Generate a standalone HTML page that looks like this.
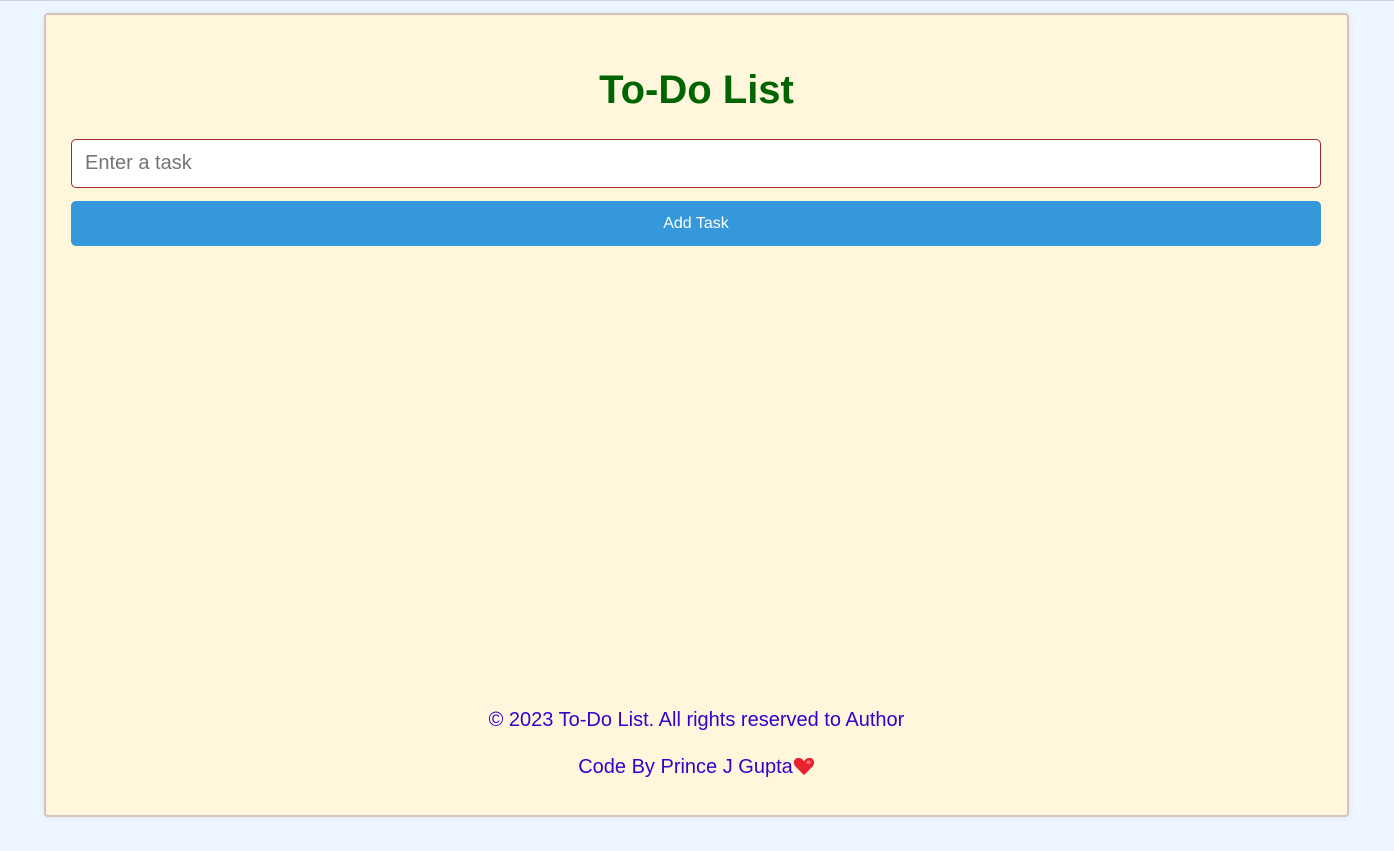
<!DOCTYPE html>
<html><head><meta charset="utf-8"><style>
html,body{margin:0;padding:0}
body{width:1394px;height:851px;background:#eef6ff;font-family:"Liberation Sans",Arial,sans-serif;position:relative;overflow:hidden;border-top:1px solid #cfd6de;box-sizing:border-box}
.card{position:absolute;left:44px;top:12px;width:1301px;height:800px;background:#fff7dc;border:2px solid #d8c0bd;border-radius:4px;box-shadow:0 0 8px rgba(0,0,0,0.08)}
h1{position:absolute;top:53px;left:0;right:0;margin:0;text-align:center;color:#006400;font-size:40px;font-weight:bold}
.inp{position:absolute;left:25px;top:124px;height:49px;background:#fff;border:1px solid #a52a2a;border-radius:5px;font-size:20px;color:#757575;line-height:47px;padding-left:13px;box-sizing:border-box;width:1250px}
.btn{position:absolute;left:25px;top:186px;width:1250px;height:45px;background:#3498db;border-radius:5px;color:#fff;font-size:16px;text-align:center;line-height:45px}
.f{position:absolute;left:0;right:0;text-align:center;color:#3300cc;font-size:20px}
</style></head><body>
<div class="card">
<h1>To-Do List</h1>
<div class="inp">Enter a task</div>
<div class="btn">Add Task</div>
<div class="f" style="top:694px">© 2023 To-Do List. All rights reserved to Author</div>
<div class="f" style="top:741px">Code By Prince J Gupta<svg width="22" height="20" viewBox="0 0 24 22" style="vertical-align:-3px"><path d="M12 21 L3 12 C-1 8 1 2 6 2 C9 2 11 4 12 6 C13 4 15 2 18 2 C23 2 25 8 21 12 Z" fill="#e8232f"/><ellipse cx="17" cy="7" rx="2.5" ry="2" fill="#ff8a8a" opacity=".7"/></svg></div>
</div>
</body></html>
